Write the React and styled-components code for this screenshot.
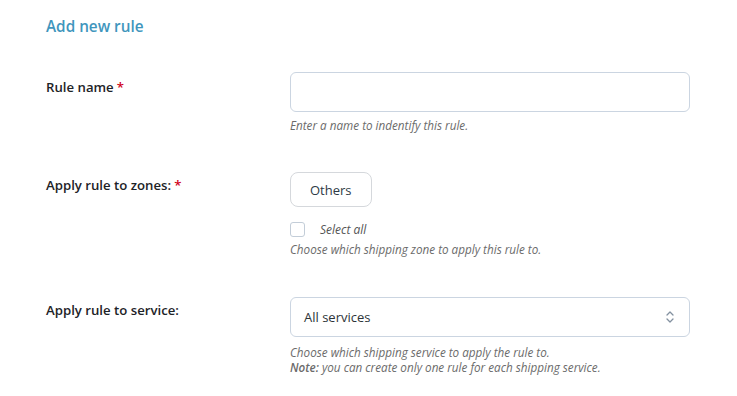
import React from "react";
import styled, { createGlobalStyle } from "styled-components";

const Global = createGlobalStyle`
  html, body { margin: 0; padding: 0; background: #fff; }
  body { font-family: "Open Sans", "Noto Sans", sans-serif; color: #1e1e1e; }
  * { box-sizing: border-box; }
`;

const Page = styled.div`
  padding: 15px 0 0 46px;
  width: 737px;
  height: 396px;
  overflow: hidden;
`;

const Heading = styled.h2`
  margin: 0 0 35px;
  font-size: 15.3px;
  line-height: 22px;
  font-weight: 600;
  color: #3f96bd;
`;

const Row = styled.div`
  display: grid;
  grid-template-columns: 244px 400px;
  margin-bottom: ${(p) => p.$gap || 0}px;
`;

const Label = styled.label`
  padding-top: ${(p) => p.$pt || 6}px;
  font-size: 13.2px;
  line-height: 18px;
  font-weight: 600;
  color: #1d2327;
`;

const Req = styled.span`
  color: #d0021b;
  margin-left: 3px;
`;

const Field = styled.div`
  display: flex;
  flex-direction: column;
  align-items: flex-start;
`;

const TextInput = styled.input`
  width: 400px;
  height: 40px;
  border: 1px solid #cbd5e1;
  border-radius: 6px;
  padding: 0 12px;
  font: inherit;
  outline: none;
`;

const Help = styled.p`
  margin: ${(p) => p.$mt || 6}px 0 0;
  font-size: 11.7px;
  line-height: 15px;
  font-style: italic;
  color: #6b6b6b;
  b { font-weight: 600; }
`;

const ZoneButton = styled.button`
  height: 35px;
  padding: 0 19px;
  border: 1px solid #d5d8dc;
  border-radius: 8px;
  background: #fff;
  font-family: inherit;
  font-size: 13px;
  color: #2e3a46;
`;

const CheckRow = styled.label`
  display: flex;
  align-items: center;
  gap: 15px;
  margin-top: 14px;
  font-size: 12px;
  font-style: italic;
  color: #555;
`;

const Box = styled.span`
  width: 15px;
  height: 15px;
  border: 1px solid #c3cdd8;
  border-radius: 3px;
  background: #fff;
`;

const SelectBox = styled.div`
  width: 400px;
  height: 40px;
  border: 1px solid #cbd5e1;
  border-radius: 6px;
  display: flex;
  align-items: center;
  justify-content: space-between;
  padding: 0 14px 0 13px;
  font-size: 13px;
  color: #2c3338;
`;

const Chevrons = () => (
  <svg width="10" height="14" viewBox="0 0 10 14" fill="none" stroke="#8391a0" strokeWidth="1.3" strokeLinecap="round" strokeLinejoin="round">
    <path d="M2 5 L5 2 L8 5" />
    <path d="M2 9 L5 12 L8 9" />
  </svg>
);

export default function App() {
  return (
    <>
      <Global />
      <Page>
        <Heading>Add new rule</Heading>
        <Row $gap={39}>
          <Label $pt={6}>
            Rule name<Req>*</Req>
          </Label>
          <Field>
            <TextInput type="text" />
            <Help $mt={6}>Enter a name to indentify this rule.</Help>
          </Field>
        </Row>
        <Row $gap={40}>
          <Label $pt={4}>
            Apply rule to zones:<Req>*</Req>
          </Label>
          <Field>
            <ZoneButton>Others</ZoneButton>
            <CheckRow>
              <Box />
              Select all
            </CheckRow>
            <Help $mt={4}>Choose which shipping zone to apply this rule to.</Help>
          </Field>
        </Row>
        <Row>
          <Label $pt={4}>Apply rule to service:</Label>
          <Field>
            <SelectBox>
              All services
              <Chevrons />
            </SelectBox>
            <Help $mt={8}>
              Choose which shipping service to apply the rule to.
              <br />
              <b>Note:</b> you can create only one rule for each shipping service.
            </Help>
          </Field>
        </Row>
      </Page>
    </>
  );
}
